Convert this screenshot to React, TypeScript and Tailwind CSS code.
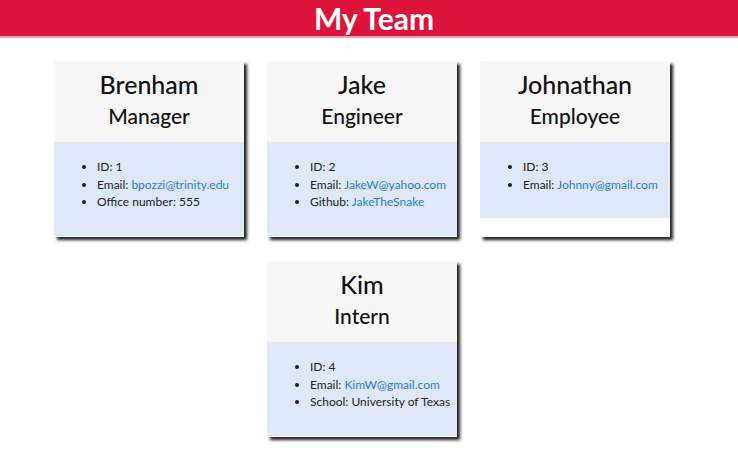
import React from "react"

type Member = {
  name: string
  role: string
  id: number
  email: string
  extra?: { label: string; value: string; link?: boolean }
}

const team: Member[] = [
  {
    name: "Brenham",
    role: "Manager",
    id: 1,
    email: "bpozzi@trinity.edu",
    extra: { label: "Office number", value: "555" },
  },
  {
    name: "Jake",
    role: "Engineer",
    id: 2,
    email: "JakeW@yahoo.com",
    extra: { label: "Github", value: "JakeTheSnake", link: true },
  },
  { name: "Johnathan", role: "Employee", id: 3, email: "Johnny@gmail.com" },
  {
    name: "Kim",
    role: "Intern",
    id: 4,
    email: "KimW@gmail.com",
    extra: { label: "School", value: "University of Texas" },
  },
]

function Card({ m }: { m: Member }) {
  return (
    <div className="w-[190px] h-[176px] bg-white shadow-[3px_3px_3px_#1f1f1f] flex flex-col">
      <div className="h-[82px] shrink-0 bg-[#f7f7f7] border-b border-[#e6e6e6] flex flex-col items-center pt-[8px]">
        <h2 className="text-[25px] leading-[31px] font-medium text-[#111]">{m.name}</h2>
        <h3 className="text-[21px] leading-[31px] font-medium text-[#111]">{m.role}</h3>
      </div>
      <div className="bg-[#dfe8f9] pt-[15px] pb-[9px] pl-[43px]">
        <ul className="list-disc text-[12px] leading-[17.5px] text-[#222] mb-[16px] whitespace-nowrap">
          <li>ID: {m.id}</li>
          <li>
            Email: <a href="#" className="text-[#2a7ae2]">{m.email}</a>
          </li>
          {m.extra && (
            <li>
              {m.extra.label}:{" "}
              {m.extra.link ? (
                <a href="#" className="text-[#2a7ae2]">{m.extra.value}</a>
              ) : (
                m.extra.value
              )}
            </li>
          )}
        </ul>
      </div>
    </div>
  )
}

export default function App() {
  return (
    <div className="min-h-[476px] bg-white font-['Lato',sans-serif]">
      <header className="h-[38px] bg-[#dc143c] border-b-2 border-[#f2a0ae] flex items-center justify-center pl-[10px]">
        <h1 className="text-[30px] leading-[36px] font-bold text-white">My Team</h1>
      </header>
      <div className="w-[724px] flex flex-wrap justify-center gap-x-[23px] gap-y-[24px] pt-[23px]">
        {team.map((m) => (
          <Card key={m.id} m={m} />
        ))}
      </div>
    </div>
  )
}
